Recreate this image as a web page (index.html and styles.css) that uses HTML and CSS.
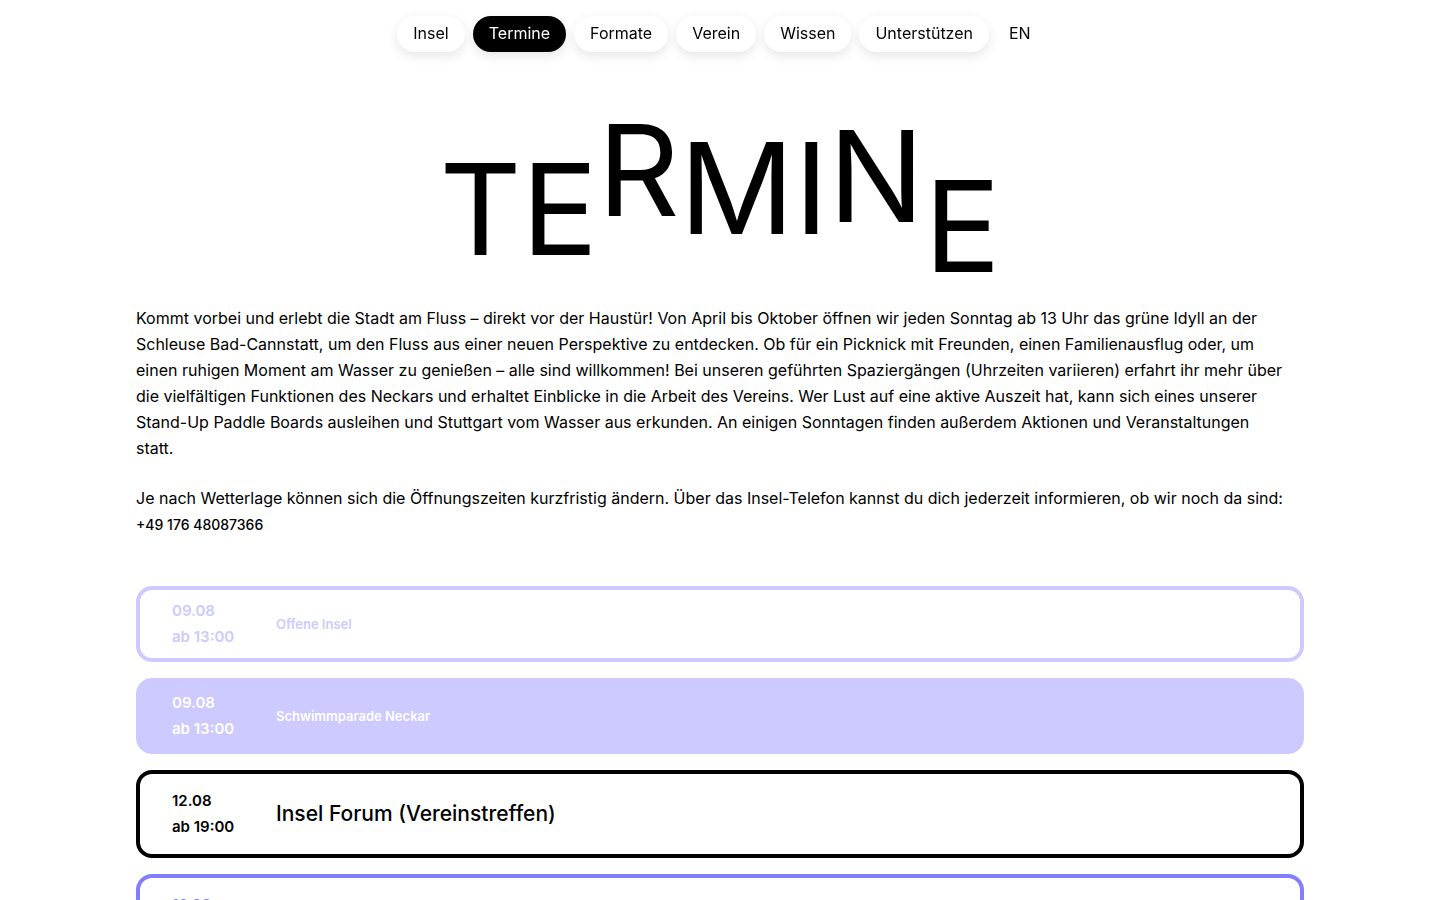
FILE: index.html
```
<!DOCTYPE html>
<html lang="de">
<head>
  <meta charset="UTF-8" />
  <meta name="viewport" content="width=device-width, initial-scale=1.0"/>
  <title>Termine</title>
  <link rel="stylesheet" href="styles.css">
</head>
<body>
  <nav>
    <a href="#insel">Insel</a>
    <a href="#termine" class="active" aria-current="page">Termine</a>
    <a href="#formate">Formate</a>
    <a href="#verein">Verein</a>
    <a href="#wissen">Wissen</a>
    <a href="#unterstuetzen">Unterstützen</a>
    <a href="#en" class="lang">EN</a>
  </nav>

  <main>
    <h1 class="title">
      <span class="mid">T</span><span class="mid">E</span><span class="top">R</span><span class="high">M</span><span class="high">I</span><span class="upper">N</span><span class="low">E</span>
    </h1>

    <div class="intro">
      <p>Kommt vorbei und erlebt die Stadt am Fluss – direkt vor der Haustür! Von April bis Oktober öffnen wir jeden Sonntag ab 13 Uhr das grüne Idyll an der Schleuse Bad-Cannstatt, um den Fluss aus einer neuen Perspektive zu entdecken. Ob für ein Picknick mit Freunden, einen Familienausflug oder, um<br> einen ruhigen Moment am Wasser zu genießen – alle sind willkommen! Bei unseren geführten Spaziergängen (Uhrzeiten variieren) erfahrt ihr mehr über die vielfältigen Funktionen des Neckars und erhaltet Einblicke in die Arbeit des Vereins. Wer Lust auf eine aktive Auszeit hat, kann sich eines unserer Stand-Up Paddle Boards ausleihen und Stuttgart vom Wasser aus erkunden. An einigen Sonntagen finden außerdem Aktionen und Veranstaltungen<br> statt.</p>
      <p>Je nach Wetterlage können sich die Öffnungszeiten kurzfristig ändern. Über das Insel-Telefon kannst du dich jederzeit informieren, ob wir noch da sind: <a href="tel:+4917648087366">+49 176 48087366</a></p>
    </div>

    <ul class="events">
      <li class="event past">
        <div class="date">09.08<br>ab 13:00</div>
        <h2>Offene Insel</h2>
      </li>
      <li class="event past filled">
        <div class="date">09.08<br>ab 13:00</div>
        <h2>Schwimmparade Neckar</h2>
      </li>
      <li class="event forum">
        <div class="date">12.08<br>ab 19:00</div>
        <h2>Insel Forum (Vereinstreffen)</h2>
      </li>
      <li class="event">
        <div class="date">16.08<br>ab 13:00</div>
        <h2>Offene Insel</h2>
      </li>
    </ul>
  </main>
</body>
</html>
```
FILE: styles.css
```
:root {
  --text-color: #000;
  --accent-color: #807dff;
  --past-color: #cccaff;
}
* { box-sizing: border-box; }
body {
  margin: 0; font-family: Inter, "Liberation Sans", sans-serif; font-size: 16px; line-height: 26px;
  background: #fff; color: var(--text-color);
}
a { color: inherit; text-decoration: none; }

nav {
  position: fixed; top: 0; left: 0; right: 0; z-index: 10;
  display: flex; justify-content: center; gap: 8px; padding: 16px;
}
nav a {
  padding: 4px 16px 6px; border-radius: 18px; background: #fff;
  box-shadow: 0 4px 12px rgba(0,0,0,0.1);
}
nav a.active { background: #000; color: #fff; }
nav a.lang { padding: 4px 12px 6px; background: none; box-shadow: none; }

main { padding: 112px 136px 48px; }

/* staggered headline, every letter hangs at its own height */
.title {
  display: flex; justify-content: center; align-items: flex-start;
  margin: 0; height: 193px; font-size: 127px; line-height: 112px; font-weight: 400;
}
.title .top { margin-top: 2px; }
.title .upper { margin-top: 8px; }
.title .high { margin-top: 20px; }
.title .mid { margin-top: 41px; }
.title .low { margin-top: 58px; }

.intro p { margin: 0 0 24px; }
.intro p:last-child { margin-bottom: 48px; }
.intro a { font-size: 14px; font-weight: 500; }

.events {
  display: flex; flex-direction: column; gap: 16px;
  list-style: none; margin: 0; padding: 0;
}
.event {
  display: flex; align-items: center; padding: 14px 32px;
  border: 4px solid var(--accent-color); border-radius: 16px; color: var(--accent-color);
}
.event .date { width: 104px; font-size: 15px; font-weight: 600; }
.event h2 { margin: 0; font-size: 21px; font-weight: 500; }
.event.past { padding: 8px 32px; border-color: var(--past-color); color: var(--past-color); }
.event.past h2 { font-size: 13px; font-weight: 600; }
.event.filled { background: var(--past-color); color: #fff; }
.event.forum { border-color: #000; color: #000; }

@media (max-width: 768px) {
  nav { flex-wrap: wrap; }
  main { padding: 160px 16px 32px; }
  .title { font-size: 56px; height: 144px; }
  .intro br { display: none; }
}
```
